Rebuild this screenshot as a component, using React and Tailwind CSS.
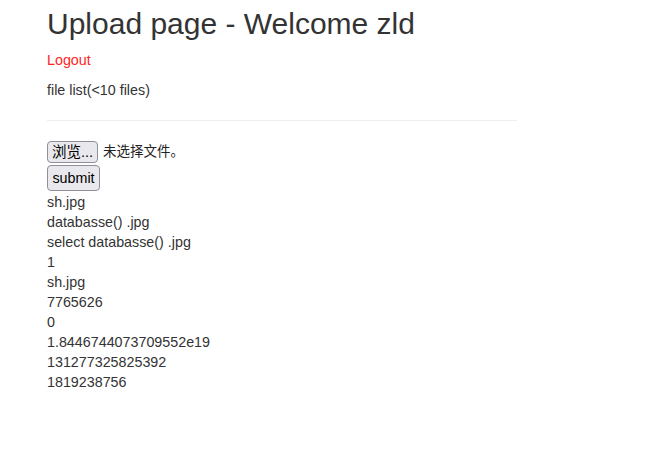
import React from 'react';

const files = [
  'sh.jpg',
  'databasse() .jpg',
  'select databasse() .jpg',
  '1',
  'sh.jpg',
  '7765626',
  '0',
  '1.8446744073709552e19',
  '131277325825392',
  '1819238756',
];

const btn =
  'rounded-[4px] border border-[#8f8f9d] bg-[#e9e9ed] leading-none text-black flex items-center justify-center';

export default function App() {
  return (
    <div className="min-h-[458px] bg-white text-[#333] text-[14.3px] leading-[20px] [font-family:'Liberation_Sans',Arial,'Noto_Sans_CJK_SC',sans-serif]">
      <div className="w-[470px] ml-[47px] pt-[7px]">
        <h1 className="text-[30px] leading-[33px] font-normal mb-[10px]">Upload page - Welcome zld</h1>
        <p className="mb-[10px]">
          <a href="#" className="text-[#ff2626]">Logout</a>
        </p>
        <p className="mb-[20px]">file list(&lt;10 files)</p>
        <hr className="border-0 border-t border-[#eeeeee] mb-[20px]" />
        <div className="flex items-center h-[22px]">
          <button className={`${btn} w-[51px] h-[22px] text-[14.5px]`}>浏览...</button>
          <span className="ml-[5px] text-[13.5px] text-[#222]">未选择文件。</span>
        </div>
        <button className={`${btn} mt-[2px] w-[53px] h-[26px] text-[14.3px]`}>submit</button>
        <ul className="pt-[1px]">
          {files.map((f, i) => (
            <li key={i}>{f}</li>
          ))}
        </ul>
      </div>
    </div>
  );
}
